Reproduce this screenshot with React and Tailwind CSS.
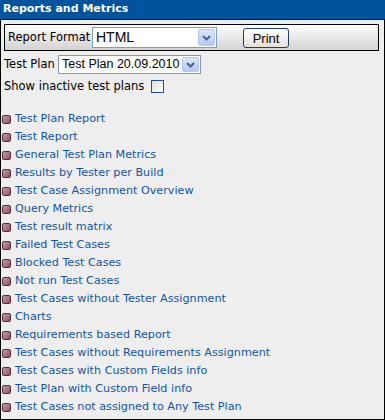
import React from 'react';

const REPORTS = [
  'Test Plan Report',
  'Test Report',
  'General Test Plan Metrics',
  'Results by Tester per Build',
  'Test Case Assignment Overview',
  'Query Metrics',
  'Test result matrix',
  'Failed Test Cases',
  'Blocked Test Cases',
  'Not run Test Cases',
  'Test Cases without Tester Assignment',
  'Charts',
  'Requirements based Report',
  'Test Cases without Requirements Assignment',
  'Test Cases with Custom Fields info',
  'Test Plan with Custom Field info',
  'Test Cases not assigned to Any Test Plan',
];

function XpSelect({ value, className, textSize }) {
  return (
    <div className={`flex items-stretch border border-[#7f9db9] bg-white ${className}`}>
      <div className={`flex-1 flex items-center pl-[3px] whitespace-nowrap overflow-hidden text-black font-['Liberation_Sans',Arial,sans-serif] ${textSize}`}>
        {value}
      </div>
      <div className="w-[17px] m-px rounded-[2px] border border-[#b5c8f3] bg-gradient-to-b from-[#dbe6fe] to-[#b4c9f8] flex items-center justify-center">
        <svg width="9" height="6" viewBox="0 0 9 6">
          <path d="M1 1 L4.5 4.5 L8 1" stroke="#4d6185" strokeWidth="2" fill="none" />
        </svg>
      </div>
    </div>
  );
}

function Bullet() {
  return (
    <span className="w-[9px] h-[9px] shrink-0 rounded-[2px] border border-[#5c2c3c] bg-gradient-to-br from-[#c79aaa] to-[#8a5466]" />
  );
}

export default function App() {
  return (
    <div className="w-[385px] h-[420px] bg-[#eeeeee] font-['DejaVu_Sans',Verdana,sans-serif] text-[11px] text-black">
      <div className="h-[20px] bg-[#00549b] border-b border-black flex items-center pl-[3px] text-white font-bold text-[11px]">
        Reports and Metrics
      </div>
      <div className="h-[400px] border-l border-r border-b border-black pt-[4px] pr-[2px]">
        {/* report format box */}
        <div className="mx-[3px] h-[27px] border border-black bg-gradient-to-b from-white to-[#d2d2d2] flex items-center">
          <span className="ml-[3px] w-[84px] text-[11.5px] whitespace-nowrap">Report Format</span>
          <XpSelect value="HTML" className="w-[125px] h-[21px]" textSize="text-[14px]" />
          <button className="ml-[26px] w-[46px] h-[20px] rounded-[3px] border border-[#1c3e6e] bg-gradient-to-b from-white to-[#e3e1d6] text-[13px] font-['Liberation_Sans',Arial,sans-serif]">
            Print
          </button>
        </div>

        {/* test plan */}
        <div className="flex items-center mt-[4px] ml-[3px]">
          <span className="w-[54px] text-[11.5px] whitespace-nowrap">Test Plan</span>
          <XpSelect value="Test Plan 20.09.2010" className="w-[143px] h-[19px]" textSize="text-[12.5px]" />
        </div>

        <div className="flex items-center mt-[4px] ml-[3px]">
          <span className="text-[11.5px] whitespace-nowrap">Show inactive test plans</span>
          <span className="ml-[7px] w-[13px] h-[13px] border border-[#1c5180] bg-gradient-to-br from-[#dcdcd5] to-white" />
        </div>

        {/* report list */}
        <ul className="mt-[15px] ml-px">
          {REPORTS.map((r) => (
            <li key={r} className="h-[18px] flex items-center gap-[4px]">
              <Bullet />
              <span className="text-[11.2px] text-[#13569f] whitespace-nowrap">{r}</span>
            </li>
          ))}
        </ul>
      </div>
    </div>
  );
}
